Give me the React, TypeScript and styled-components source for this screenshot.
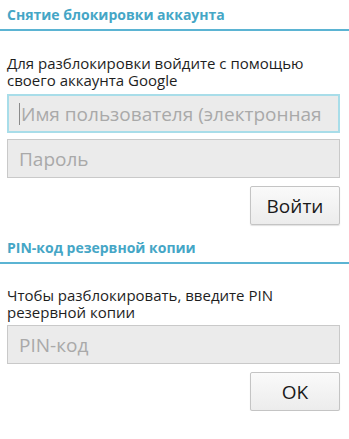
import React from 'react';
import styled, { createGlobalStyle } from 'styled-components';

const GlobalStyle = createGlobalStyle`
  html, body {
    margin: 0;
    padding: 0;
    background: #ffffff;
  }
  body {
    font-family: 'Open Sans', 'Noto Sans', sans-serif;
    color: #1c1c1c;
  }
`;

const Screen = styled.div`
  width: 349px;
  display: flex;
  flex-direction: column;
`;

const SectionTitle = styled.div<{ $offset?: number }>`
  height: 31px;
  box-sizing: border-box;
  margin-top: ${(p) => p.$offset ?? 0}px;
  padding: 6px 7px 0;
  font-size: 14px;
  font-weight: 700;
  line-height: 18px;
  color: #45a6c6;
  border-bottom: 2px solid #5bb4d3;
`;

const Section = styled.div<{ $gap: number }>`
  display: flex;
  flex-direction: column;
  padding: 0 9px 0 7px;
  margin-top: ${(p) => p.$gap}px;
`;

const Hint = styled.p<{ $after: number }>`
  margin: 0 0 ${(p) => p.$after}px;
  font-size: 15px;
  line-height: 17px;
  color: #1e1e1e;
`;

const Field = styled.div<{ $focused?: boolean }>`
  height: 39px;
  box-sizing: border-box;
  display: flex;
  align-items: center;
  padding-left: ${(p) => (p.$focused ? 10 : 11)}px;
  background: #ebebeb;
  border: ${(p) => (p.$focused ? '2px solid #a8dde9' : '1px solid #c9c9c9')};
  font-size: 19px;
  color: #a9a9a9;
  white-space: nowrap;
  overflow: hidden;
  & + & {
    margin-top: 6px;
  }
`;

const Caret = styled.span`
  display: inline-block;
  width: 1px;
  height: 22px;
  background: #8a8a8a;
  margin-right: 1px;
`;

const Actions = styled.div`
  display: flex;
  justify-content: flex-end;
  margin-top: 8px;
`;

const Button = styled.button`
  width: 90px;
  height: 39px;
  box-sizing: border-box;
  border: 1px solid #c4c4c4;
  border-radius: 2px;
  background: linear-gradient(#fafafa, #ececec);
  box-shadow: 0 1px 1px rgba(0, 0, 0, 0.12);
  font-family: 'Open Sans', 'Noto Sans', sans-serif;
  font-size: 19px;
  color: #1a1a1a;
  padding: 0;
`;

export default function App() {
  return (
    <Screen>
      <GlobalStyle />
      <SectionTitle>Снятие блокировки аккаунта</SectionTitle>
      <Section $gap={24}>
        <Hint $after={5}>
          Для разблокировки войдите с помощью
          <br />
          своего аккаунта Google
        </Hint>
        <Field $focused>
          <Caret />
          Имя пользователя (электронная
        </Field>
        <Field>Пароль</Field>
        <Actions>
          <Button>Войти</Button>
        </Actions>
      </Section>
      <SectionTitle $offset={8}>PIN-код резервной копии</SectionTitle>
      <Section $gap={23}>
        <Hint $after={4}>
          Чтобы разблокировать, введите PIN
          <br />
          резервной копии
        </Hint>
        <Field>PIN-код</Field>
        <Actions>
          <Button>OK</Button>
        </Actions>
      </Section>
    </Screen>
  );
}
